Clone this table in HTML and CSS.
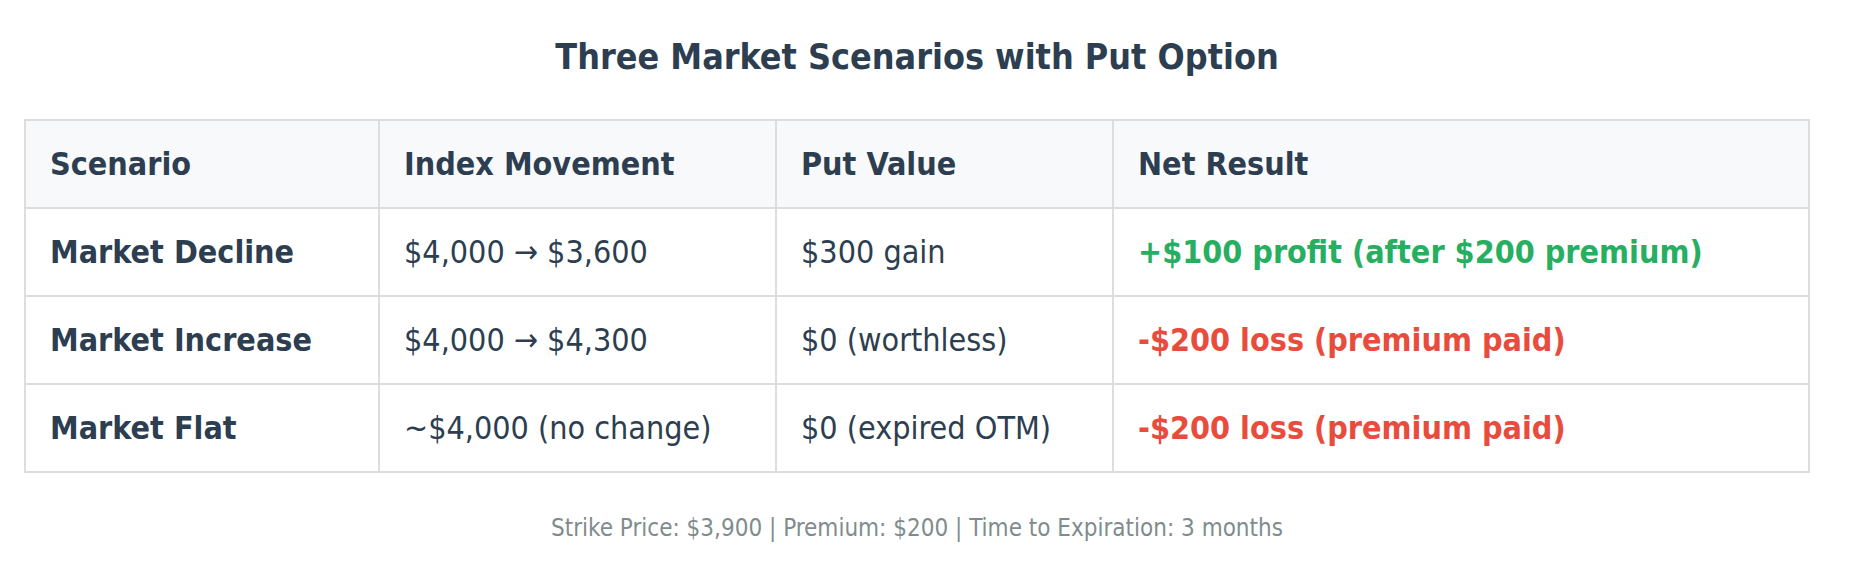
FILE: index.html
```html
<!DOCTYPE html>
<html lang="en">
<head>
<meta charset="utf-8">
<title>Three Market Scenarios with Put Option</title>
<link rel="stylesheet" href="styles.css">
</head>
<body>
<main class="page">
  <h1 class="title">Three Market Scenarios with Put Option</h1>
  <table class="scenarios">
    <colgroup>
      <col class="col-scenario">
      <col class="col-index">
      <col class="col-put">
      <col class="col-net">
    </colgroup>
    <thead>
      <tr>
        <th>Scenario</th>
        <th>Index Movement</th>
        <th>Put Value</th>
        <th>Net Result</th>
      </tr>
    </thead>
    <tbody>
      <tr>
        <td class="name">Market Decline</td>
        <td>$4,000 → $3,600</td>
        <td>$300 gain</td>
        <td class="profit">+$100 profit (after $200 premium)</td>
      </tr>
      <tr>
        <td class="name">Market Increase</td>
        <td>$4,000 → $4,300</td>
        <td>$0 (worthless)</td>
        <td class="loss">-$200 loss (premium paid)</td>
      </tr>
      <tr>
        <td class="name">Market Flat</td>
        <td>~$4,000 (no change)</td>
        <td>$0 (expired OTM)</td>
        <td class="loss">-$200 loss (premium paid)</td>
      </tr>
    </tbody>
  </table>
  <p class="note">Strike Price: $3,900 | Premium: $200 | Time to Expiration: 3 months</p>
</main>
</body>
</html>
```
FILE: styles.css
```css
html, body {
  margin: 0;
  padding: 0;
  background: #ffffff;
}

body {
  font-family: "DejaVu Sans Condensed", "DejaVu Sans", sans-serif;
  color: #2c3e50;
}

.page {
  padding: 0 39px 0 24px;
}

.title {
  margin: 0;
  padding-top: 36px;
  font-size: 35.6px;
  line-height: 42px;
  font-weight: bold;
  text-align: center;
  color: #2c3e50;
}

.scenarios {
  width: 100%;
  margin-top: 41px;
  border-collapse: collapse;
  table-layout: fixed;
}

.col-scenario { width: 354px; }
.col-index { width: 397px; }
.col-put { width: 337px; }

.scenarios th,
.scenarios td {
  border: 2px solid #dddddd;
  padding: 24px;
  text-align: left;
  font-size: 32px;
  line-height: 38px;
}

.scenarios th {
  background: #f8f9fa;
  font-weight: bold;
}

.scenarios td.name {
  font-weight: bold;
}

.scenarios td.profit {
  color: #27ae60;
  font-weight: bold;
}

.scenarios td.loss {
  color: #e74c3c;
  font-weight: bold;
}

.note {
  margin: 40px 0 0;
  text-align: center;
  font-size: 24px;
  line-height: 30px;
  color: #7f8c8d;
}
```
